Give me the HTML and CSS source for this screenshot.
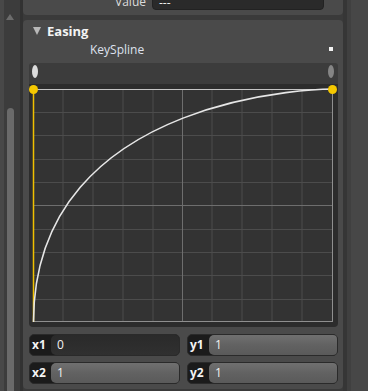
FILE: index.html
```html
<!DOCTYPE html>
<html lang="en">
<head>
    <meta charset="UTF-8">
    <title>Easing - KeySpline</title>
    <link rel="stylesheet" href="styles.css">
</head>
<body>
    <div class="shell">
        <div class="scroll-left">
            <span class="scroll-up"></span>
            <span class="scroll-thumb"></span>
        </div>

        <div class="main">
            <div class="section section-top">
                <div class="prop-row">
                    <span class="prop-label">Value</span>
                    <div class="textbox">---</div>
                </div>
            </div>

            <div class="section section-easing">
                <div class="sec-head"><span class="sec-arrow"></span>Easing</div>
                <div class="sub-head">
                    <span>KeySpline</span>
                    <span class="sub-dot"></span>
                </div>

                <div class="track">
                    <span class="knob knob-on"></span>
                    <span class="knob knob-off"></span>
                </div>

                <div class="graph">
                    <svg width="309" height="243" viewBox="0 0 309 243">
                        <rect class="plot-bg" x="4" y="5" width="300" height="233"/>
                        <!-- grid -->
                        <g stroke="#4c4c4c" stroke-width="1">
                            <line x1="34" y1="5" x2="34" y2="238"/>
                            <line x1="64" y1="5" x2="64" y2="238"/>
                            <line x1="94" y1="5" x2="94" y2="238"/>
                            <line x1="124" y1="5" x2="124" y2="238"/>
                            <line x1="183" y1="5" x2="183" y2="238"/>
                            <line x1="213" y1="5" x2="213" y2="238"/>
                            <line x1="243" y1="5" x2="243" y2="238"/>
                            <line x1="273" y1="5" x2="273" y2="238"/>
                            <line x1="4" y1="28.5" x2="303" y2="28.5"/>
                            <line x1="4" y1="51.5" x2="303" y2="51.5"/>
                            <line x1="4" y1="75.5" x2="303" y2="75.5"/>
                            <line x1="4" y1="98.5" x2="303" y2="98.5"/>
                            <line x1="4" y1="145.5" x2="303" y2="145.5"/>
                            <line x1="4" y1="168.5" x2="303" y2="168.5"/>
                            <line x1="4" y1="191.5" x2="303" y2="191.5"/>
                            <line x1="4" y1="215.5" x2="303" y2="215.5"/>
                        </g>
                        <g stroke="#6e6e6e" stroke-width="1">
                            <line x1="153.5" y1="5" x2="153.5" y2="238"/>
                            <line x1="4" y1="121.5" x2="303" y2="121.5"/>
                        </g>
                        <rect class="plot-frame" x="4.5" y="5.5" width="299" height="232"/>
                        <line x1="4" y1="5.5" x2="303" y2="5.5" stroke="#c4c4c4"/>
                        <!-- control line -->
                        <line x1="4.5" y1="238" x2="4.5" y2="5" stroke="#f0c000" stroke-width="1.5"/>
                        <!-- curve -->
                        <path d="M4.5 238 C4.5 5 303.5 5 303.5 5" fill="none" stroke="#e6e6e6" stroke-width="1.6"/>
                        <circle cx="4.5" cy="5.5" r="4.5" fill="#f5c800"/>
                        <circle cx="303.5" cy="5.5" r="4.5" fill="#f5c800"/>
                    </svg>
                </div>

                <div class="fields">
                    <div class="field">
                        <span class="field-label">x1</span>
                        <span class="field-value field-active">0</span>
                    </div>
                    <div class="field">
                        <span class="field-label">y1</span>
                        <span class="field-value">1</span>
                    </div>
                    <div class="field">
                        <span class="field-label">x2</span>
                        <span class="field-value">1</span>
                    </div>
                    <div class="field">
                        <span class="field-label">y2</span>
                        <span class="field-value">1</span>
                    </div>
                </div>
            </div>
        </div>

        <div class="scroll-right"></div>
    </div>
</body>
</html>
```

FILE: styles.css
```css
body {
    margin: 0;
    background: #3a3a3a;
    font-family: 'Open Sans', 'Noto Sans', sans-serif;
    font-size: 12px;
    color: #e2e2e2;
    overflow: hidden;
}

.shell {
    display: flex;
    height: 391px;
}

/* left scroll column */
.scroll-left {
    width: 23px;
    flex: none;
    display: flex;
    flex-direction: column;
    align-items: center;
    background: linear-gradient(90deg, #484848 0, #484848 4px, #3c3c3c 4px, #3c3c3c 20px, #323232 20px);
    padding-right: 3px;
    box-sizing: border-box;
}

.scroll-up {
    width: 0;
    height: 0;
    border-left: 4px solid transparent;
    border-right: 4px solid transparent;
    border-bottom: 6px solid #6c6c6c;
    margin-top: 14px;
}

.scroll-thumb {
    width: 7px;
    flex: 1;
    margin-top: 88px;
    background: #6a6a6a;
    border-radius: 4px 4px 0 0;
}

.main {
    width: 320px;
    flex: none;
    display: flex;
    flex-direction: column;
}

.scroll-right {
    flex: 1;
    background: linear-gradient(90deg, #363636 0, #363636 4px, #404040 4px, #404040 8px, #474747 8px);
}

.section {
    background: #4a4a4a;
    border-radius: 4px;
}

.section-top {
    height: 17px;
    border-radius: 0 0 4px 4px;
    margin-bottom: 5px;
    overflow: hidden;
}

.prop-row {
    display: flex;
    align-items: flex-start;
    margin-top: -9px;
    height: 22px;
}

.prop-label {
    width: 123px;
    text-align: right;
    line-height: 22px;
    color: #dcdcdc;
}

.textbox {
    margin: -3px 0 0 6px;
    width: 172px;
    height: 22px;
    box-sizing: border-box;
    padding-left: 6px;
    line-height: 28px;
    overflow: hidden;
    background: #2a2a2a;
    border: 1px solid #222;
    border-radius: 4px;
    color: #f0f0f0;
}

.section-easing {
    flex: 1;
    margin-bottom: 2px;
    padding: 3px 5px 5px 6px;
    display: flex;
    flex-direction: column;
}

.sec-head {
    display: flex;
    align-items: center;
    height: 16px;
    font-size: 13px;
    font-weight: bold;
    color: #f4f4f4;
}

.sec-arrow {
    width: 0;
    height: 0;
    border-left: 4px solid transparent;
    border-right: 4px solid transparent;
    border-top: 8px solid #b8b8b8;
    margin: 0 6px 0 4px;
}

.sub-head {
    display: flex;
    align-items: center;
    justify-content: space-between;
    height: 20px;
    padding: 0 5px 0 61px;
    color: #dfe2ee;
}

.sub-dot {
    width: 4px;
    height: 4px;
    background: #f2f2f2;
}

.track {
    margin-top: 4px;
    height: 19px;
    display: flex;
    justify-content: space-between;
    align-items: flex-start;
    padding: 2px 4px 0 3px;
    background: #3c3c3c;
    border-radius: 3px 3px 0 0;
}

.knob {
    width: 6px;
    height: 13px;
    border-radius: 50%;
}

.knob-on {
    background: #dcdcdc;
}

.knob-off {
    background: #858585;
}

.graph {
    height: 243px;
    background: #2c2c2c;
    border-radius: 0 0 4px 4px;
}

.graph svg {
    display: block;
    overflow: visible;
}

.graph .plot-bg {
    fill: #333333;
}

.graph .plot-frame {
    fill: none;
    stroke: #8f8f8f;
}

.fields {
    margin-top: 7px;
    display: grid;
    grid-template-columns: 1fr 1fr;
    gap: 6px 7px;
}

.field {
    display: flex;
    height: 22px;
    background: #1b1b1b;
    border: 1px solid #2a2a2a;
    border-radius: 5px;
    box-sizing: border-box;
    overflow: hidden;
}

.field-label {
    width: 19px;
    padding-left: 2px;
    line-height: 20px;
    font-weight: bold;
    color: #f4f4f4;
}

.field-value {
    flex: 1;
    padding-left: 6px;
    line-height: 20px;
    color: #f2f2f2;
    border-radius: 5px 0 0 5px;
    background: linear-gradient(180deg, #707070 0%, #626262 50%, #5a5a5a 100%);
}

.field-value.field-active {
    background: linear-gradient(180deg, #2a2a2a 0%, #303030 100%);
}
```
